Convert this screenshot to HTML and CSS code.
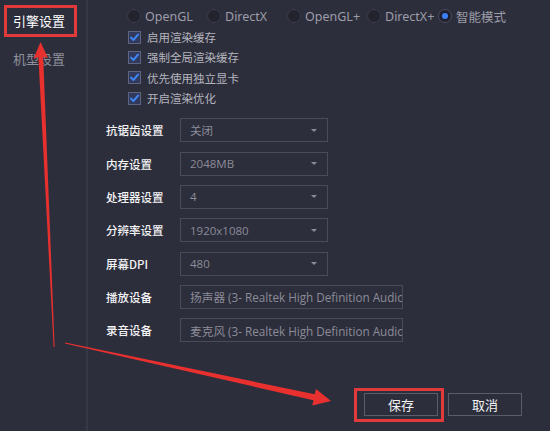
FILE: index.html
```html
<!DOCTYPE html>
<html lang="zh">
<head>
<meta charset="utf-8">
<link rel="stylesheet" href="styles.css">
</head>
<body>
<div class="app">
  <aside class="sidebar">
    <div class="nav active">引擎设置</div>
    <div class="nav">机型设置</div>
  </aside>
  <main class="content">
    <div class="radios">
      <label class="radio"><span class="dot"></span>OpenGL</label>
      <label class="radio"><span class="dot"></span>DirectX</label>
      <label class="radio"><span class="dot"></span>OpenGL+</label>
      <label class="radio"><span class="dot"></span>DirectX+</label>
      <label class="radio checked"><span class="dot"></span>智能模式</label>
    </div>
    <div class="checks">
      <label class="check"><svg class="box" viewBox="0 0 13 13"><rect x="0.5" y="0.5" width="12" height="12" /><path d="M3 6.6 L5.4 9 L10 3.6" /></svg>启用渲染缓存</label>
      <label class="check"><svg class="box" viewBox="0 0 13 13"><rect x="0.5" y="0.5" width="12" height="12" /><path d="M3 6.6 L5.4 9 L10 3.6" /></svg>强制全局渲染缓存</label>
      <label class="check"><svg class="box" viewBox="0 0 13 13"><rect x="0.5" y="0.5" width="12" height="12" /><path d="M3 6.6 L5.4 9 L10 3.6" /></svg>优先使用独立显卡</label>
      <label class="check"><svg class="box" viewBox="0 0 13 13"><rect x="0.5" y="0.5" width="12" height="12" /><path d="M3 6.6 L5.4 9 L10 3.6" /></svg>开启渲染优化</label>
    </div>
    <div class="form">
      <span class="lbl">抗锯齿设置</span><div class="select"><span class="val">关闭</span><span class="caret"></span></div>
      <span class="lbl">内存设置</span><div class="select"><span class="val">2048MB</span><span class="caret"></span></div>
      <span class="lbl">处理器设置</span><div class="select"><span class="val">4</span><span class="caret"></span></div>
      <span class="lbl">分辨率设置</span><div class="select"><span class="val">1920x1080</span><span class="caret"></span></div>
      <span class="lbl">屏幕DPI</span><div class="select"><span class="val">480</span><span class="caret"></span></div>
      <span class="lbl">播放设备</span><div class="select wide"><span class="val">扬声器 (3- Realtek High Definition Audio)</span></div>
      <span class="lbl">录音设备</span><div class="select wide"><span class="val">麦克风 (3- Realtek High Definition Audio)</span></div>
    </div>
    <div class="actions">
      <button class="btn">保存</button>
      <button class="btn">取消</button>
    </div>
  </main>
  <svg class="annot" viewBox="0 0 550 431" width="550" height="431">
    <polygon points="40.5,42 48,58 43.2,57 54.6,347 53.6,347 38.4,57 33.5,59" />
    <polygon points="65.1,342.5 314.7,394.2 316,389 331,401 312.3,405.4 313.5,400.2 64.9,343.5" />
  </svg>
  <div class="mark mark-nav"></div>
  <div class="mark mark-save"></div>
</div>
</body>
</html>
```
FILE: styles.css
```css
* { box-sizing: border-box; }
html, body { margin: 0; padding: 0; }
body {
  background: #2d2e3c;
  font-family: "Noto Sans", "Noto Sans CJK SC", sans-serif;
  width: 550px;
  height: 431px;
  overflow: hidden;
}
.app {
  position: relative;
  display: flex;
  width: 550px;
  height: 431px;
  background: #2d2e3c;
}
.sidebar {
  width: 88px;
  flex: none;
  border-right: 2px solid #373846;
  padding-top: 11px;
  display: flex;
  flex-direction: column;
  gap: 18px;
}
.nav {
  font-family: "Noto Sans CJK SC", sans-serif;
  font-size: 13px;
  line-height: 20px;
  padding-left: 13px;
  color: #8e8f9a;
}
.nav.active { color: #ffffff; }

.content {
  flex: 1;
  padding-top: 6px;
  display: flex;
  flex-direction: column;
}
.radios {
  display: grid;
  grid-template-columns: 80px 80px 80px 71px auto;
  padding-left: 39px;
  height: 20px;
  align-items: center;
}
.radio {
  display: flex;
  align-items: center;
  gap: 4px;
  font-size: 12.5px;
  color: #9c9da8;
  white-space: nowrap;
  font-family: "Noto Sans", "Noto Sans CJK SC", sans-serif;
}
.dot {
  width: 14px;
  height: 14px;
  border-radius: 50%;
  background: #22232d;
  border: 1px solid #3a3b49;
  flex: none;
  display: flex;
  align-items: center;
  justify-content: center;
}
.radio.checked .dot { border-color: #4a4c60; background: #1f2130; }
.radio.checked .dot::after {
  content: "";
  width: 6px;
  height: 6px;
  border-radius: 50%;
  background: #3d80f7;
}
.checks {
  display: grid;
  grid-auto-rows: 20.3px;
  padding-left: 40px;
  margin-top: 1px;
}
.check {
  display: flex;
  align-items: center;
  gap: 6px;
  font-family: "Noto Sans CJK SC", sans-serif;
  font-size: 11.5px;
  color: #b4b5be;
}
.box { width: 13px; height: 13px; flex: none; }
.box rect { fill: #313a5c; stroke: #5e6580; stroke-width: 1; }
.box path { fill: none; stroke: #3f87f5; stroke-width: 2; stroke-linecap: round; stroke-linejoin: round; }

.form {
  margin-top: 10px;
  padding-left: 18px;
  display: grid;
  grid-template-columns: 74px auto;
  grid-auto-rows: 24px;
  row-gap: 9.33px;
  align-items: center;
  justify-items: start;
}
.lbl {
  font-family: "Noto Sans CJK SC", sans-serif;
  font-size: 11.5px;
  font-weight: 500;
  color: #f4f4f6;
  white-space: nowrap;
}
.select {
  width: 148px;
  height: 24px;
  border: 1px solid #4a4b59;
  display: flex;
  align-items: center;
  justify-content: space-between;
  padding: 0 10px 0 9px;
  overflow: hidden;
}
.select.wide { width: 223px; padding-right: 0; }
.val {
  font-family: "Open Sans", "Noto Sans CJK SC", sans-serif;
  font-size: 11.5px;
  color: #8b8c97;
  white-space: nowrap;
}
.select.wide .val { font-size: 11.7px; }
.caret {
  width: 0;
  height: 0;
  border-left: 3px solid transparent;
  border-right: 3px solid transparent;
  border-top: 3px solid #8b8c97;
  flex: none;
}
.actions {
  margin-top: 51px;
  display: flex;
  justify-content: flex-end;
  gap: 10px;
  padding-right: 28px;
}
.btn {
  width: 74px;
  height: 23px;
  background: transparent;
  border: 1px solid #5b5c69;
  color: #f2f2f4;
  font-family: "Noto Sans CJK SC", sans-serif;
  font-size: 13px;
  padding: 0;
  line-height: 21px;
}
.annot {
  position: absolute;
  left: 0;
  top: 0;
  pointer-events: none;
}
.annot polygon { fill: #e8302f; }
.mark {
  position: absolute;
  border: 3px solid #e2393a;
  pointer-events: none;
}
.mark-nav { left: 4px; top: 5px; width: 73px; height: 32px; }
.mark-save { left: 354px; top: 388px; width: 90px; height: 34px; }
```
